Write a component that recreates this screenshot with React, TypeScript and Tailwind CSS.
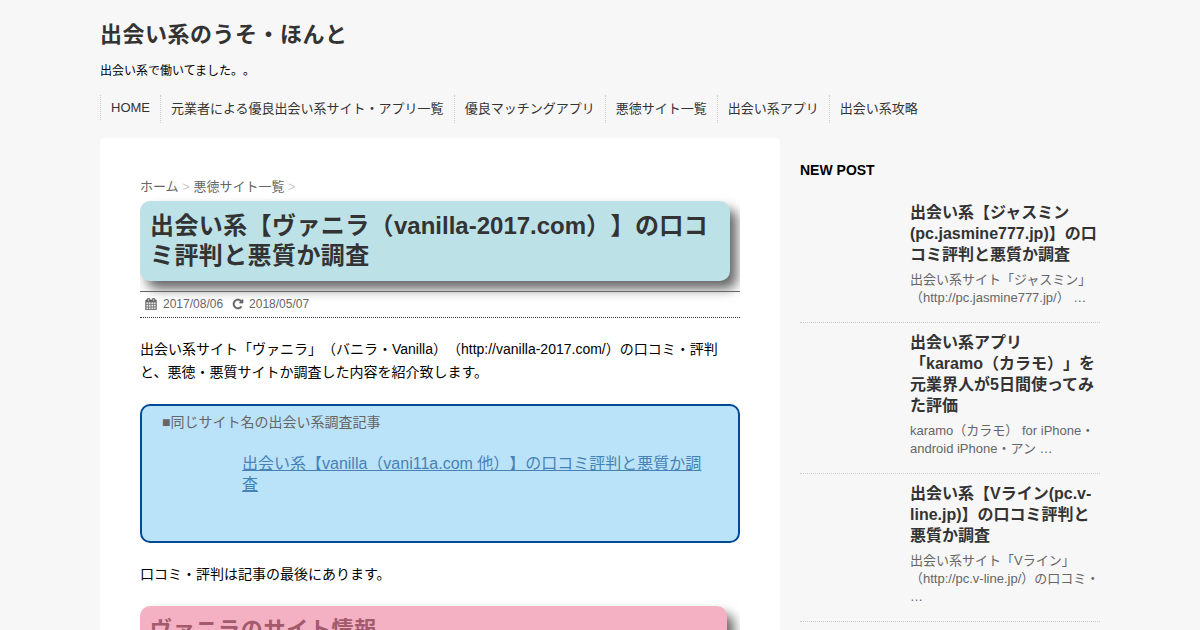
import type { ReactNode } from 'react';

const menu = [
  'HOME',
  '元業者による優良出会い系サイト・アプリ一覧',
  '優良マッチングアプリ',
  '悪徳サイト一覧',
  '出会い系アプリ',
  '出会い系攻略',
];

const posts = [
  {
    title: '出会い系【ジャスミン(pc.jasmine777.jp)】の口コミ評判と悪質か調査',
    excerpt: '出会い系サイト「ジャスミン」（http://pc.jasmine777.jp/） …',
  },
  {
    title: '出会い系アプリ\n「karamo（カラモ）」を元業界人が5日間使ってみた評価',
    excerpt: 'karamo（カラモ） for iPhone・android iPhone・アン …',
  },
  {
    title: '出会い系【Vライン(pc.v-line.jp)】の口コミ評判と悪質か調査',
    excerpt: '出会い系サイト「Vライン」（http://pc.v-line.jp/）の口コミ・ …',
  },
];

function Icon({ d }: { d: string }) {
  return (
    <svg viewBox="0 0 1792 1792" className="size-3 fill-current stroke-current" strokeWidth="50">
      <path d={d} />
    </svg>
  );
}

const calendar =
  'M192 1664h288v-288h-288v288zm352 0h320v-288h-320v288zm-352-352h288v-320h-288v320zm352 0h320v-320h-320v320zm-352-384h288v-288h-288v288zm736 736h320v-288h-320v288zm-384-736h320v-288h-320v288zm768 736h288v-288h-288v288zm-384-352h320v-320h-320v320zm-352-864v-288q0-13-9.5-22.5t-22.5-9.5h-64q-13 0-22.5 9.5t-9.5 22.5v288q0 13 9.5 22.5t22.5 9.5h64q13 0 22.5-9.5t9.5-22.5zm736 864h288v-320h-288v320zm-384-384h320v-288h-320v288zm384 0h288v-288h-288v288zm32-480v-288q0-13-9.5-22.5t-22.5-9.5h-64q-13 0-22.5 9.5t-9.5 22.5v288q0 13 9.5 22.5t22.5 9.5h64q13 0 22.5-9.5t9.5-22.5zm384-64v1280q0 52-38 90t-90 38h-1408q-52 0-90-38t-38-90v-1280q0-52 38-90t90-38h128v-96q0-66 47-113t113-47h64q66 0 113 47t47 113v96h384v-96q0-66 47-113t113-47h64q66 0 113 47t47 113v96h128q52 0 90 38t38 90z';

const repeat =
  'M1664 256v448q0 26-19 45t-45 19h-448q-42 0-59-40-17-39 14-69l138-138q-148-137-349-137-104 0-198.5 40.5t-163.5 109.5-109.5 163.5-40.5 198.5 40.5 198.5 109.5 163.5 163.5 109.5 198.5 40.5q119 0 225-52t179-147q7-10 23-12 15 0 25 9l137 138q9 8 9.5 20.5t-7.5 22.5q-109 132-264 204.5t-327 72.5q-156 0-298-61t-245-164-164-245-61-298 61-298 164-245 245-164 298-61q147 0 284.5 55.5t244.5 156.5l130-129q29-31 70-14 39 17 39 59z';

// Wide glyphs are tracked slightly in the large headings
function Wide({ children }: { children: ReactNode }) {
  return <span className="tracking-[0.4px]">{children}</span>;
}

export default function App() {
  return (
    <div
      lang="ja"
      className="h-[630px] overflow-hidden bg-[#f7f7f7] font-['Liberation_Sans','Noto_Sans_CJK_JP',sans-serif] text-black [text-spacing-trim:space-all]"
    >
      <div className="mx-auto w-[1000px]">
        {/* Header */}
        <header className="h-[95px] pt-[21px]">
          <h1 className="text-[22px] leading-7 font-bold tracking-[0.5px] text-[#333]">出会い系のうそ・ほんと</h1>
          <p className="mt-3 text-xs leading-5">出会い系で働いてました。。</p>
        </header>

        {/* Menu */}
        <nav className="flex h-[43px] items-start text-[13px] text-[#333]">
          {menu.map((item) => (
            <a
              key={item}
              className="border-l border-dotted border-[#ccc] px-[10px] pt-1 pb-1 leading-5 first:h-[25px] first:pt-[3px] first:pb-0"
            >
              {item}
            </a>
          ))}
        </nav>

        <div className="flex items-start gap-5">
          {/* Article */}
          <main className="h-[600px] w-[680px] rounded-t bg-white px-10 pt-[39px]">
            <div className="h-full overflow-x-clip">
              <p className="h-6 text-[13px] leading-5 text-[#666]">
                ホーム <span className="text-[#ccc]">&gt;</span> 悪徳サイト一覧{' '}
                <span className="text-[#ccc]">&gt;</span>
              </p>
              <h2 className="h-20 w-[590px] rounded-[10px] bg-[#bce1e6] p-[10px] text-2xl leading-[30px] font-bold text-[#333] shadow-[7px_8px_12px_rgba(0,0,0,0.6)]">
                <Wide>出会い系【ヴァニラ（</Wide>vanilla-2017.com<Wide>）】の口コ</Wide>
                <br />
                <Wide>ミ評判と悪質か調査</Wide>
              </h2>
              <div className="mt-[10px] flex h-[27px] items-center border-t border-b border-t-[#666] border-b-[#333] px-[5px] pb-[2px] text-xs text-[#666] [border-bottom-style:dotted]">
                <Icon d={calendar} />
                <span className="ml-[6px]">2017/08/06</span>
                <span className="ml-[9px]">
                  <Icon d={repeat} />
                </span>
                <span className="ml-[5px]">2018/05/07</span>
              </div>

              <p className="mt-5 text-sm leading-[23px]">
                出会い系サイト「ヴァニラ」（バニラ・Vanilla）（http://vanilla-2017.com/）の口コミ・評判と、悪徳・悪質サイトか調査した内容を紹介致します。
              </p>

              <section className="mt-5 h-[139px] rounded-[10px] border-2 border-[#004a97] bg-[#bae2f8] px-5 pt-[5px]">
                <p className="text-sm leading-[23px] text-[#666]">■同じサイト名の出会い系調査記事</p>
                <a className="mt-[19px] ml-20 block leading-[21px] text-[#4682b4] underline">
                  出会い系【vanilla（vani11a.com 他）】の口コミ評判と悪質か調
                  <br />査
                </a>
              </section>

              <p className="mt-5 text-sm leading-[23px]">口コミ・評判は記事の最後にあります。</p>

              <h3 className="mt-5 h-14 w-[587px] rounded-[10px] bg-[#f4b1c3] p-[10px] text-[22px] leading-7 font-bold tracking-[0.7px] text-[#a35a6d] shadow-[7px_8px_12px_rgba(0,0,0,0.6)]">
                ヴァニラのサイト情報
              </h3>
            </div>
          </main>

          {/* Sidebar */}
          <aside className="w-[300px] pt-[21px]">
            <h4 className="text-sm leading-[23px] font-bold">NEW POST</h4>
            <div className="mt-5">
              {posts.map((post) => (
                <div key={post.title} className="mb-[9px] border-b border-dotted border-[#ccc] pb-[15px] pl-[110px]">
                  <h5 className="leading-[21px] font-bold whitespace-pre-line text-[#333]">{post.title}</h5>
                  <p className="mt-[6px] text-[13px] leading-[18px] text-[#666]">{post.excerpt}</p>
                </div>
              ))}
            </div>
          </aside>
        </div>
      </div>
    </div>
  );
}
